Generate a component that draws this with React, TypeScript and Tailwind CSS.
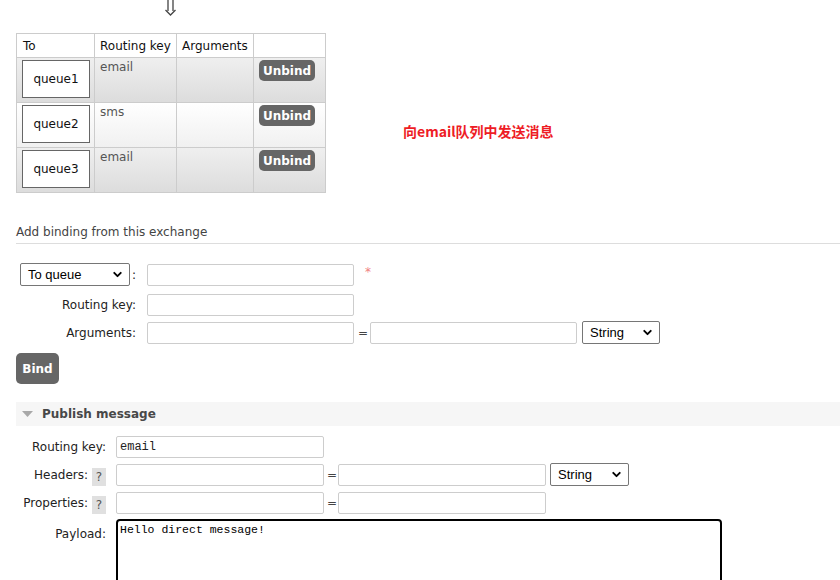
import { ChevronDown } from 'lucide-react'

interface Binding {
  queue: string
  key: string
  alt: boolean
}

const bindings: Binding[] = [
  { queue: 'queue1', key: 'email', alt: true },
  { queue: 'queue2', key: 'sms', alt: false },
  { queue: 'queue3', key: 'email', alt: true },
]

function Select({ label, width }: { label: string; width: string }) {
  return (
    <div
      className={`${width} h-[23px] border border-[#767676] rounded-[2px] bg-white flex items-center justify-between pl-[7px] pr-[5px] font-['Liberation_Sans',sans-serif] text-[13px] text-black`}
    >
      <span>{label}</span>
      <ChevronDown className="w-[13px] h-[13px]" strokeWidth={3.5} />
    </div>
  )
}

function TextInput({ width, value }: { width: string; value?: string }) {
  return (
    <div
      className={`${width} h-[22px] border border-[#cdcdcd] rounded-[2px] bg-white px-[3px] flex items-center font-['Liberation_Mono',monospace] text-[12px] text-[#222]`}
    >
      {value}
    </div>
  )
}

function Help() {
  return (
    <span className="w-[14px] h-[18px] bg-[#e0e0e0] flex items-center justify-center text-[12px] text-[#555]">
      ?
    </span>
  )
}

export default function App() {
  return (
    <div className="min-h-screen bg-white overflow-hidden font-['DejaVu_Sans','Noto_Sans_CJK_SC',sans-serif] text-[12px] text-[#444]">
      {/* Arrow */}
      <div className="h-[17px] pl-[164px]">
        <svg width="13" height="16" viewBox="0 0 13 16" fill="none" stroke="#444" strokeWidth="1.3">
          <path d="M4 0 V11 M9 0 V11" />
          <path d="M1.5 10 L6.5 15 L11.5 10" />
        </svg>
      </div>

      {/* Bindings table */}
      <div className="flex items-start mt-[16px] pl-[16px]">
        <div className="border-l border-t border-[#ccc]">
          <div className="grid grid-cols-[78px_82px_77px_72px] h-[24px] bg-white text-[#111]">
            <div className="border-r border-b border-[#ccc] px-[6px] flex items-center">To</div>
            <div className="border-r border-b border-[#ccc] px-[5px] flex items-center">Routing key</div>
            <div className="border-r border-b border-[#ccc] px-[5px] flex items-center">Arguments</div>
            <div className="border-r border-b border-[#ccc]" />
          </div>
          {bindings.map(b => (
            <div
              key={b.queue}
              className={`grid grid-cols-[78px_82px_77px_72px] h-[45px] bg-linear-to-b ${
                b.alt ? 'from-[#efefef] to-[#dcdcdc]' : 'from-white to-[#f0f0f0]'
              }`}
            >
              <div className="border-r border-b border-[#ccc] pl-[5px] pt-[2px]">
                <div className="w-[68px] h-[38px] border border-[#666] bg-white flex items-center justify-center text-[#111]">
                  {b.queue}
                </div>
              </div>
              <div className="border-r border-b border-[#ccc] px-[5px] pt-[2px] leading-[15px] text-[#555]">
                {b.key}
              </div>
              <div className="border-r border-b border-[#ccc]" />
              <div className="border-r border-b border-[#ccc] pl-[5px] pt-[2px]">
                <button className="w-[56px] h-[21px] rounded-[5px] bg-[#666] text-white font-bold text-[12px] flex items-center justify-center">
                  Unbind
                </button>
              </div>
            </div>
          ))}
        </div>
        <div className="ml-[77px] mt-[88px] font-['Noto_Sans_CJK_SC',sans-serif] font-bold text-[14px] text-[#ee1c25]">
          向email队列中发送消息
        </div>
      </div>

      {/* Add binding */}
      <div className="mt-[32px] ml-[16px] pb-[3px] border-b border-[#ddd] leading-[15px] text-[#444]">
        Add binding from this exchange
      </div>

      <div className="pl-[16px] mt-[19px] text-[#222]">
        <div className="flex items-center">
          <div className="w-[120px] flex items-center justify-end">
            <Select label="To queue" width="w-[110px]" />
            <span className="ml-[2px]">:</span>
          </div>
          <div className="ml-[11px]">
            <TextInput width="w-[207px]" />
          </div>
          <span className="ml-[11px] -mt-[5px] text-[#f08080] text-[12px]">*</span>
        </div>
        <div className="flex items-center mt-[8px]">
          <div className="w-[120px] text-right">Routing key:</div>
          <div className="ml-[11px]">
            <TextInput width="w-[207px]" />
          </div>
        </div>
        <div className="flex items-center mt-[5px]">
          <div className="w-[120px] text-right">Arguments:</div>
          <div className="ml-[11px]">
            <TextInput width="w-[207px]" />
          </div>
          <span className="ml-[4px] mr-[2px] text-[#444]">=</span>
          <TextInput width="w-[207px]" />
          <div className="ml-[5px]">
            <Select label="String" width="w-[78px]" />
          </div>
        </div>
        <button className="mt-[9px] w-[43px] h-[31px] rounded-[5px] bg-[#666] text-white font-bold text-[12px] flex items-center justify-center">
          Bind
        </button>
      </div>

      {/* Publish message */}
      <div className="mt-[18px] ml-[16px] h-[24px] bg-[#f6f6f6] flex items-center">
        <svg width="11" height="6" viewBox="0 0 11 6" className="ml-[6px]">
          <polygon points="0,0 11,0 5.5,6" fill="#a8a8a8" />
        </svg>
        <span className="ml-[9px] font-bold text-[12px] text-[#484848]">Publish message</span>
      </div>

      <div className="pl-[16px] mt-[10px] text-[#222]">
        <div className="flex items-center">
          <div className="w-[90px] text-right">Routing key:</div>
          <div className="ml-[10px]">
            <TextInput width="w-[208px]" value="email" />
          </div>
        </div>
        <div className="flex items-center mt-[5px]">
          <div className="w-[90px] flex items-center justify-end gap-[4px]">
            <span>Headers:</span>
            <span className="mt-[4px]">
              <Help />
            </span>
          </div>
          <div className="ml-[10px]">
            <TextInput width="w-[208px]" />
          </div>
          <span className="ml-[3px] mr-[1px] text-[#444]">=</span>
          <TextInput width="w-[208px]" />
          <div className="ml-[4px]">
            <Select label="String" width="w-[79px]" />
          </div>
        </div>
        <div className="flex items-center mt-[6px]">
          <div className="w-[90px] flex items-center justify-end gap-[4px]">
            <span>Properties:</span>
            <span className="mt-[4px]">
              <Help />
            </span>
          </div>
          <div className="ml-[10px]">
            <TextInput width="w-[208px]" />
          </div>
          <span className="ml-[3px] mr-[1px] text-[#444]">=</span>
          <TextInput width="w-[208px]" />
        </div>
        <div className="flex items-start mt-[5px]">
          <div className="w-[90px] text-right mt-[6px]">Payload:</div>
          <div className="ml-[10px] w-[606px] h-[100px] border-2 border-black rounded-[4px] px-[2px] pt-[1px] leading-[16px] font-['Liberation_Mono',monospace] text-[11.5px] text-black">
            Hello direct message!
          </div>
        </div>
      </div>
    </div>
  )
}
